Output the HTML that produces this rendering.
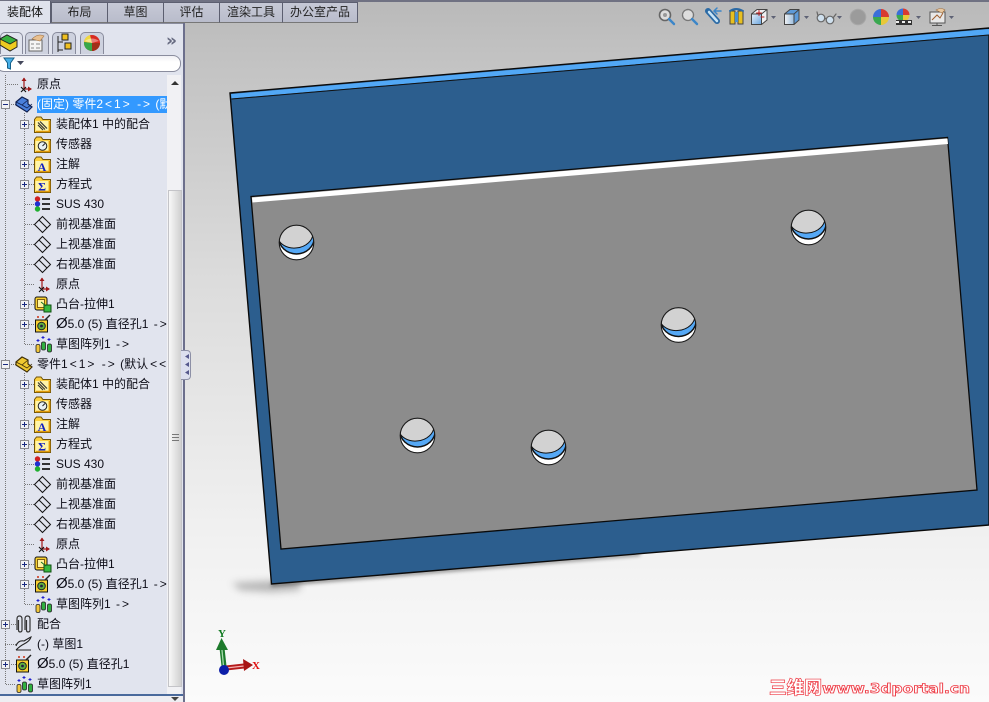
<!DOCTYPE html>
<html><head><meta charset="utf-8">
<style>
html,body{margin:0;padding:0;width:989px;height:702px;overflow:hidden;background:#fff}
body{position:relative;font:12px/16px "Liberation Sans","Noto Sans CJK SC",sans-serif;color:#111}
.abs{position:absolute}
#view{position:absolute;left:0;top:0;width:989px;height:702px}
#tabs div{position:absolute;top:2px;height:19px;background:linear-gradient(#c6c9d6,#b9bccb);border:1px solid #5c5f70;border-bottom-color:#777;box-sizing:content-box;text-align:center;line-height:19px;color:#222;font-size:12px}
#side{position:absolute;left:0;top:23px;width:183px;height:679px;background:#e1e4ee;border-top:1px solid #8a8d9e;box-sizing:border-box}
#tree{position:absolute;left:0;top:75px;width:167px;height:620px;overflow:hidden;background:#e1e4ee}
.r{position:absolute;white-space:nowrap;height:18px;line-height:18px;font-size:12px;color:#0c0c16}
.hl{background:#3399ff;color:#fff;width:130px;overflow:hidden;height:17px;line-height:17px}
.a{letter-spacing:2px;margin-left:2px}
.o{font-size:15px;line-height:0}
.ftab{position:absolute;top:32px;height:21px;width:22px;background:#ced2df;border:1px solid #888b9c;border-bottom:none;border-radius:5px 5px 0 0}
</style></head><body>
<svg id="view" viewBox="0 0 989 702" xmlns="http://www.w3.org/2000/svg">
<defs>
<linearGradient id="bg" x1="0" y1="0" x2="0" y2="1"><stop offset="0" stop-color="#b9b9b9"/><stop offset=".08" stop-color="#c2c2c2"/><stop offset=".4" stop-color="#dcdcdc"/><stop offset=".75" stop-color="#f0f0f0"/><stop offset="1" stop-color="#fbfbfb"/></linearGradient>
<linearGradient id="fb" x1="0" y1="0" x2="1" y2="1"><stop offset="0" stop-color="#e4eef8"/><stop offset="1" stop-color="#6ea8e0"/></linearGradient>
<linearGradient id="fg" x1="0" y1="0" x2="1" y2="0"><stop offset="0" stop-color="#eef0f2"/><stop offset="1" stop-color="#9fc0e0"/></linearGradient>
<filter id="bl" x="-10%" y="-200%" width="120%" height="500%"><feGaussianBlur stdDeviation="4"/></filter>
<filter id="bl2" x="-10%" y="-200%" width="120%" height="500%"><feGaussianBlur stdDeviation="1.800"/></filter>
<clipPath id="hc"><circle cx="0" cy="0" r="17.2"/></clipPath>
<g id="hole">
<circle r="17.3" fill="#fff"/>
<g clip-path="url(#hc)">
<ellipse cx="0" cy="-5" rx="18.5" ry="17.2" fill="#111"/>
<ellipse cx="0" cy="-5.5" rx="17.2" ry="16.2" fill="#55a8f5"/>
<ellipse cx="-0.5" cy="-8" rx="17.6" ry="13.4" transform="rotate(-6)" fill="#d2d2d2" stroke="#111" stroke-width="1"/>
</g>
<circle r="17.3" fill="none" stroke="#1a1a1a" stroke-width="1.1"/>
</g>
</defs>
<rect width="989" height="702" fill="url(#bg)"/>
<path d="M232 583 L271 581 L300 580 L300 590 L271 592 L240 590 Z" fill="#555" opacity=".4" filter="url(#bl)"/>
<path d="M271 583 L640 553 L640 556 L271 587 Z" fill="#333" opacity=".5" filter="url(#bl2)"/>
<polygon points="230,93 989,28 989,525 271.500,584" fill="#2c5e8e" stroke="#0a0a0a" stroke-width="1.400"/>
<polygon points="231,94 989,29 989,34.500 231.500,98.500" fill="#52a8f6"/>
<path d="M231.500 99 L989 35" stroke="#111" stroke-width="1"/>
<polygon points="251,196.500 947.500,137.500 977,490 281,549" fill="#8c8c8c" stroke="#0a0a0a" stroke-width="1.300"/>
<polygon points="252,197.500 947.500,138.500 948,144 252.500,202.500" fill="#fff"/>
<use href="#hole" x="296.500" y="242.500"/>
<use href="#hole" x="808.500" y="227.500"/>
<use href="#hole" x="678.500" y="325"/>
<use href="#hole" x="417.500" y="435.500"/>
<use href="#hole" x="548.500" y="447.500"/>
<!-- triad -->
<path d="M224 666 L222 648" stroke="#1d7a2c" stroke-width="5"/>
<path d="M223.500 666 L221.800 648" stroke="#a8dcae" stroke-width="1.300"/>
<polygon points="221.500,638 228,650 216,650" fill="#1d7a2c"/>
<path d="M226 668 L244 666" stroke="#b51a1a" stroke-width="5"/>
<path d="M226 668 L244 666" stroke="#f4b0b0" stroke-width="1.300"/>
<polygon points="253,665 243,659 244,671" fill="#a81414"/>
<circle cx="224" cy="670" r="5" fill="#0c1ea8"/>
<text x="218" y="637" font-family="Liberation Serif,serif" font-size="11" font-weight="bold" fill="#117a22">Y</text>
<text x="252" y="669" font-family="Liberation Serif,serif" font-size="11" font-weight="bold" fill="#e01010">X</text>
<!-- watermark -->
<text x="769" y="694" font-family="Noto Sans CJK SC,sans-serif" font-size="18" font-weight="900" fill="#fff" stroke="#ee3a44" stroke-width=".7" textLength="53" lengthAdjust="spacingAndGlyphs">三维网</text>
<text x="822" y="693" font-family="DejaVu Sans,sans-serif" font-size="13" font-weight="700" fill="#fff" stroke="#ee3a44" stroke-width=".8" textLength="148" lengthAdjust="spacingAndGlyphs">www.3dportal.cn</text>
<!-- top toolbar -->
<rect x="0" y="0" width="989" height="2" fill="#6f7182"/>
<g fill="none" stroke-linecap="round">
<g><circle cx="665" cy="15" r="5.500" stroke="#666" stroke-width="1.600" fill="#ddd"/><circle cx="665" cy="15" r="2" fill="#999"/><path d="M669 19 L674 24" stroke="#3c86c8" stroke-width="2.400"/></g>
<g><circle cx="688" cy="15" r="5.500" stroke="#777" stroke-width="1.400" stroke-dasharray="2 1" fill="#ddd"/><path d="M692 19 L697 24" stroke="#3c86c8" stroke-width="2.400"/></g>
<g><path d="M708 11 L717 21" stroke="#2b6aa5" stroke-width="6"/><path d="M709 12 L717 21" stroke="#c8e4f6" stroke-width="2.500"/><path d="M721 11 H714 M717 8 L714 11 L717 14" stroke="#3c86c8" stroke-width="1.500"/></g>
<g><rect x="730" y="11" width="5" height="13" fill="#e8c020" stroke="#444"/><rect x="738" y="11" width="5" height="13" fill="#e8c020" stroke="#444"/><path d="M730 11 Q736 7 743 11" stroke="#2b6aa5" stroke-width="2"/><rect x="735" y="12" width="3" height="10" fill="#4a90d0"/></g>
<g><path d="M751.500 14 L757 9.500 H767 V20 L761.500 24.500 H751.500 Z" fill="#eef0f2" stroke="#444"/><rect x="752" y="14.500" width="9" height="9.500" fill="url(#fb)"/><path d="M751.500 14 H761.500 V24.500 M761.500 14 L767 9.500" stroke="#444"/><path d="M759 10.500 v5 M756.500 13 h5 M764 17 h-3" stroke="#c02020"/></g>
<g><path d="M784.500 14 L790 9.500 H799 V20 L794 24.500 H784.500 Z" fill="#5d9ad8" stroke="#444"/><rect x="785" y="14.500" width="8.500" height="9.500" fill="url(#fg)"/><path d="M784.500 14 H794 V24.500 M794 14 L799 9.500" stroke="#444"/></g>
<g stroke="#666" stroke-width="1.200"><circle cx="821" cy="18" r="3.800" fill="#cfe0ee"/><circle cx="830" cy="20" r="3.800" fill="#cfe0ee"/><path d="M824.500 18 L826.500 19 M818 16 L817 12 M833 18 L836 14"/></g>
</g>
<g fill="#5e6275"><polygon points="771,16 776,16 773.500,19"/><polygon points="804,16 809,16 806.500,19"/><polygon points="837,16 842,16 839.500,19"/><polygon points="916,16 921,16 918.500,19"/><polygon points="949,16 954,16 951.500,19"/></g>
<circle cx="858" cy="17" r="7.800" fill="#9b9b9b" stroke="#a8a8a8"/>
<g>
<path d="M881 17 L873 17 A8 8 0 0 1 881 9 Z" fill="#3a6fd8"/>
<path d="M881 17 L881 9 A8 8 0 0 1 889 17 Z" fill="#d83a30"/>
<path d="M881 17 L889 17 A8 8 0 0 1 881 25 Z" fill="#e8c838"/>
<path d="M881 17 L881 25 A8 8 0 0 1 873 17 Z" fill="#3aa850"/>
</g>
<g>
<path d="M903 15 L896.500 15 A6.500 6.500 0 0 1 903 8.500 Z" fill="#3a6fd8"/>
<path d="M903 15 L903 8.500 A6.500 6.500 0 0 1 909.500 15 Z" fill="#d83a30"/>
<path d="M903 15 L909.500 15 A6.500 6.500 0 0 1 903 21.500 Z" fill="#e8c838"/>
<path d="M903 15 L903 21.500 A6.500 6.500 0 0 1 896.500 15 Z" fill="#3aa850"/>
<rect x="896" y="20" width="16" height="5" fill="#333"/><path d="M896 21 h3 v2 h-3z M902 21 h3 v2 h-3z M908 21 h3 v2 h-3z" fill="#eee"/>
</g>
<g><rect x="930" y="12" width="15" height="11" fill="#e8e8e8" stroke="#555"/><path d="M937 23 V25 M932 25.500 H942" stroke="#555"/><path d="M932 20 L937 15 L940 18 L943 13" stroke="#a06030" fill="none"/><path d="M936 10 Q941 7 945 10 L942 13 Z" fill="#e8c8a0" stroke="#a07040" stroke-width=".6"/></g>
</svg>

<svg width="0" height="0" style="position:absolute"><defs>
<g id="folder"><path d="M.5 3.500 L.5 16.500 L16.500 16.500 L16.500 3.500 L9 3.500 L7 1 L2.500 1 Z" fill="#fdd040" stroke="#6e5208"/><rect x="1.500" y="5" width="13" height="10" fill="#fff4a8"/><path d="M2 15.500 H15.500 V5" stroke="#e09a08" fill="none" stroke-width="1.600"/></g>
<g id="mates"><use href="#folder"/><path d="M4 6.500 L11 13.500 M6 5.500 L13 12.500 M4 9 L9 14" stroke="#333" stroke-width="1.200"/></g>
<g id="sensor"><use href="#folder"/><circle cx="8.500" cy="10" r="4.300" fill="#e8f0f4" stroke="#222"/><path d="M8.500 10 L11 7.500" stroke="#222"/></g>
<g id="note"><use href="#folder"/><text x="8" y="15" text-anchor="middle" font-family="Liberation Serif,serif" font-weight="bold" font-size="12" fill="#1420c0">A</text></g>
<g id="eq"><use href="#folder"/><text x="8" y="14.500" text-anchor="middle" font-family="Liberation Serif,serif" font-weight="bold" font-size="12" fill="#1420c0">Σ</text></g>
<g id="mat"><circle cx="3.500" cy="3" r="2.700" fill="#d02020"/><circle cx="3.500" cy="8" r="2.700" fill="#2030d0"/><circle cx="3.500" cy="13" r="2.700" fill="#20b030"/><path d="M8 3 H16 M8 8 H16 M8 13 H16" stroke="#333" stroke-width="2"/></g>
<g id="plane"><path d="M8.500 0.500 L16.500 8.500 L8.500 16.500 L.5 8.500 Z" fill="none" stroke="#111"/><path d="M5 4 L13 12" fill="none" stroke="#111"/></g>
<g id="origin"><path d="M8 2 V13 M8 13 H15" stroke="#a01818" fill="none" stroke-width="1.200"/><path d="M5.500 5 L8 1.500 L10.500 5 Z M12 10.500 L16 13 L12 15.500 Z" fill="#a01818"/><path d="M5 11 L10 16 M10 11 L5 16" stroke="#111" stroke-width="1.100"/></g>
<g id="boss"><rect x="1" y="1" width="12" height="13" rx="2" fill="#f8d030" stroke="#111"/><rect x="3.500" y="3.500" width="7" height="8" fill="#fff4a0" stroke="#806010"/><rect x="10" y="9" width="7" height="7" fill="#38b840" stroke="#105010"/><path d="M7 6 L12 10" stroke="#107020"/></g>
<g id="holei"><rect x="1.500" y="5" width="12" height="12" fill="#f8d030" stroke="#111"/><circle cx="7.500" cy="11" r="3.800" fill="#60b040" stroke="#222"/><circle cx="7.500" cy="11" r="1.400" fill="#224"/><path d="M11 5 L16 0" stroke="#222" stroke-width="1.400"/><path d="M3 2 h2 M8 2 h2" stroke="#d03010" stroke-width="1.500"/></g>
<g id="pat"><path d="M8 1 v3 M6.500 2.500 h3 M3 4 v3 M1.500 5.500 h3 M14 3 v3 M12.500 4.500 h3" stroke="#2020d0"/><rect x="1" y="9.500" width="4" height="8" rx="1.500" fill="#f2c83c" stroke="#222" stroke-width=".8"/><rect x="6.500" y="7" width="4" height="8" rx="1.500" fill="#30b040" stroke="#222" stroke-width=".8"/><rect x="12.500" y="9" width="4" height="8" rx="1.500" fill="#30b040" stroke="#222" stroke-width=".8"/></g>
<g id="partb"><path d="M1 6 L7 1 L13 4 L13 8 L17 11 L12 16 L1 9 Z" fill="#4a80dc" stroke="#102050" stroke-width="1.200"/><path d="M1 6 L7 9 L13 4 M7 9 L12 12 L17 8" stroke="#102050" fill="none" stroke-width=".8"/></g>
<g id="party"><path d="M1 6 L7 1 L13 4 L13 8 L17 11 L12 16 L1 9 Z" fill="#f0c830" stroke="#403008" stroke-width="1.200"/><path d="M1 6 L7 9 L13 4 M7 9 L12 12 L17 8" stroke="#403008" fill="none" stroke-width=".8"/></g>
<g id="clips"><path d="M2 15 V4 Q2 1 4.500 1 Q7 1 7 4 V15 Q7 17 5 17 Q3.500 17 3.500 15 V5" fill="none" stroke="#333" stroke-width="1.200"/><path d="M10 15 V4 Q10 1 12.500 1 Q15 1 15 4 V15 Q15 17 13 17 Q11.500 17 11.500 15 V5" fill="none" stroke="#333" stroke-width="1.200"/></g>
<g id="sketch"><path d="M1 15 H16 M1 11 Q3 5 9 6 Q14 3 16 2 Q15 6 9 9 Q5 11 1 15" fill="none" stroke="#222" stroke-width="1.100"/></g>
<g id="plus"><rect x=".5" y=".5" width="8" height="8" fill="#f2f2f4" stroke="#8a8a90"/><path d="M2 4.500 H7 M4.500 2 V7" stroke="#1a2a80"/></g>
<g id="minus"><rect x=".5" y=".5" width="8" height="8" fill="#f2f2f4" stroke="#8a8a90"/><path d="M2 4.500 H7" stroke="#1a2a80"/></g>
</defs></svg>

<div id="tabs">
<div style="left:51px;width:55px">布局</div>
<div style="left:107px;width:55px">草图</div>
<div style="left:163px;width:55px">评估</div>
<div style="left:219px;width:62px">渲染工具</div>
<div style="left:282px;width:74px">办公室产品</div>
</div>

<div id="side"></div>
<div class="abs" style="left:0;top:1px;width:50px;height:22px;background:#dfe2ec;border-right:1px solid #5c5f70;text-align:center;line-height:22px;font-size:12px;color:#111;z-index:2">装配体</div>
<div class="abs" style="left:183px;top:23px;width:2px;height:679px;background:#6c6f8c"></div>

<!-- feature manager tabs -->
<div class="ftab" style="left:0;width:21px;background:#e1e4ee"></div>
<div class="ftab" style="left:25px"></div>
<div class="ftab" style="left:52px"></div>
<div class="ftab" style="left:80px"></div>
<svg class="abs" style="left:0;top:30px" width="110" height="24">
<path d="M0 9 L7 5 L17 10 L17 17 L10 21 L0 15 Z" fill="#eecb20" stroke="#222"/><path d="M7 5 L17 10 L10 14 L0 9 Z" fill="#38b040" stroke="#222" stroke-width=".8"/>
<rect x="29" y="10" width="13" height="11" fill="#f4f4f4" stroke="#666"/><path d="M31 14 h3 M31 18 h3 M36 14 h4 M36 18 h4" stroke="#888"/><path d="M32 9 Q38 3 44 6 L40 11 Z" fill="#e8c090" stroke="#a07040" stroke-width=".6"/>
<path d="M58 6 V22 M58 12 H63 M58 20 H63" stroke="#222" fill="none"/><rect x="62" y="4" width="6" height="6" fill="#f0c020" stroke="#222"/><rect x="65" y="13" width="6" height="6" fill="#f0c020" stroke="#222"/>
<circle cx="92" cy="13" r="8" fill="#d82a20"/><path d="M92 13 L84 12 A8 8 0 0 1 90 5 Z" fill="#f0d840"/><path d="M92 13 L100 13 A8 8 0 0 1 92 21 Z" fill="#a03018"/><path d="M92 13 L92 21 A8 8 0 0 1 84 12 Z" fill="#38a848"/><path d="M85 11 Q92 6 99 11 L92 13 Z" fill="#fff" opacity=".4"/>
</svg>
<div class="abs" style="left:166px;top:31px;font:bold 17px 'DejaVu Sans',sans-serif;color:#666a80">»</div>
<div class="abs" style="left:-4px;top:55px;width:183px;height:15px;background:linear-gradient(#f0f0f4,#fff 40%);border:1px solid #8a8d9e;border-radius:8px"></div>
<svg class="abs" style="left:3px;top:57px" width="26" height="13"><path d="M1 1 H11 L7.500 6 V12 L4.500 11 V6 Z" fill="#48b0e8" stroke="#15608a"/><path d="M14 4 H21 L17.500 8 Z" fill="#44485c"/></svg>

<div id="tree">
<svg class="abs" style="left:0;top:0" width="167" height="620">
<g stroke="#777" stroke-dasharray="1 1" fill="none">
<path d="M5.500 0 V609.500 H16"/>
<path d="M24.500 38 V269.500 H34 M24.500 298 V529.500 H34"/>
<path d="M18 9.500 H6 M5 29.500 H16 M5 289.500 H16 M5 549.500 H16 M5 569.500 H16 M5 589.500 H16"/>
<path d="M25 49.500 H34 M25 69.500 H34 M25 89.500 H34 M25 109.500 H34 M25 129.500 H34 M25 149.500 H34 M25 169.500 H34 M25 189.500 H34 M25 209.500 H34 M25 229.500 H34 M25 249.500 H34"/>
<path d="M25 309.500 H34 M25 329.500 H34 M25 349.500 H34 M25 369.500 H34 M25 389.500 H34 M25 409.500 H34 M25 429.500 H34 M25 449.500 H34 M25 469.500 H34 M25 489.500 H34 M25 509.500 H34"/>
</g>
<use href="#origin" x="16" y="1"/>
<use href="#minus" x="1" y="25"/><use href="#partb" x="15" y="21"/>
<use href="#plus" x="20" y="45"/><use href="#mates" x="34" y="41"/>
<use href="#sensor" x="34" y="61"/>
<use href="#plus" x="20" y="85"/><use href="#note" x="34" y="81"/>
<use href="#plus" x="20" y="105"/><use href="#eq" x="34" y="101"/>
<use href="#mat" x="34" y="121"/>
<use href="#plane" x="34" y="141"/><use href="#plane" x="34" y="161"/><use href="#plane" x="34" y="181"/>
<use href="#origin" x="34" y="201"/>
<use href="#plus" x="20" y="225"/><use href="#boss" x="34" y="221"/>
<use href="#plus" x="20" y="245"/><use href="#holei" x="34" y="240"/>
<use href="#pat" x="35" y="260"/>
<use href="#minus" x="1" y="285"/><use href="#party" x="15" y="281"/>
<use href="#plus" x="20" y="305"/><use href="#mates" x="34" y="301"/>
<use href="#sensor" x="34" y="321"/>
<use href="#plus" x="20" y="345"/><use href="#note" x="34" y="341"/>
<use href="#plus" x="20" y="365"/><use href="#eq" x="34" y="361"/>
<use href="#mat" x="34" y="381"/>
<use href="#plane" x="34" y="401"/><use href="#plane" x="34" y="421"/><use href="#plane" x="34" y="441"/>
<use href="#origin" x="34" y="461"/>
<use href="#plus" x="20" y="485"/><use href="#boss" x="34" y="481"/>
<use href="#plus" x="20" y="505"/><use href="#holei" x="34" y="500"/>
<use href="#pat" x="35" y="520"/>
<use href="#plus" x="1" y="545"/><use href="#clips" x="15" y="540"/>
<use href="#sketch" x="15" y="560"/>
<use href="#plus" x="1" y="585"/><use href="#holei" x="15" y="580"/>
<use href="#pat" x="16" y="600"/>
</svg>
<div class="r" style="left:37px;top:0">原点</div>
<div class="r hl" style="left:37px;top:21px">(固定) 零件2<span class="a">&lt;1&gt;</span> <span class="a">-&gt;</span> (默认&lt;&lt;默</div>
<div class="r" style="left:56px;top:40px">装配体1 中的配合</div>
<div class="r" style="left:56px;top:60px">传感器</div>
<div class="r" style="left:56px;top:80px">注解</div>
<div class="r" style="left:56px;top:100px">方程式</div>
<div class="r" style="left:56px;top:120px">SUS 430</div>
<div class="r" style="left:56px;top:140px">前视基准面</div>
<div class="r" style="left:56px;top:160px">上视基准面</div>
<div class="r" style="left:56px;top:180px">右视基准面</div>
<div class="r" style="left:56px;top:200px">原点</div>
<div class="r" style="left:56px;top:220px">凸台-拉伸1</div>
<div class="r" style="left:56px;top:240px"><span class="o">Ø</span>5.0 (5) 直径孔1 <span class="a">-&gt;</span></div>
<div class="r" style="left:56px;top:260px">草图阵列1 <span class="a">-&gt;</span></div>
<div class="r" style="left:37px;top:280px;width:130px;overflow:hidden">零件1<span class="a">&lt;1&gt;</span> <span class="a">-&gt;</span> (默认<span class="a">&lt;&lt;</span>默</div>
<div class="r" style="left:56px;top:300px">装配体1 中的配合</div>
<div class="r" style="left:56px;top:320px">传感器</div>
<div class="r" style="left:56px;top:340px">注解</div>
<div class="r" style="left:56px;top:360px">方程式</div>
<div class="r" style="left:56px;top:380px">SUS 430</div>
<div class="r" style="left:56px;top:400px">前视基准面</div>
<div class="r" style="left:56px;top:420px">上视基准面</div>
<div class="r" style="left:56px;top:440px">右视基准面</div>
<div class="r" style="left:56px;top:460px">原点</div>
<div class="r" style="left:56px;top:480px">凸台-拉伸1</div>
<div class="r" style="left:56px;top:500px"><span class="o">Ø</span>5.0 (5) 直径孔1 <span class="a">-&gt;</span></div>
<div class="r" style="left:56px;top:520px">草图阵列1 <span class="a">-&gt;</span></div>
<div class="r" style="left:37px;top:540px">配合</div>
<div class="r" style="left:37px;top:560px">(-) 草图1</div>
<div class="r" style="left:37px;top:580px"><span class="o">Ø</span>5.0 (5) 直径孔1</div>
<div class="r" style="left:37px;top:600px">草图阵列1</div>
</div>

<!-- scrollbar -->
<div class="abs" style="left:167px;top:75px;width:14px;height:620px;background:#f1f1f4"></div>
<div class="abs" style="left:168px;top:190px;width:14px;height:497px;background:linear-gradient(90deg,#f8f8f8,#d0d0d0);border:1px solid #c4c4c8;box-sizing:border-box"></div>
<svg class="abs" style="left:170px;top:80px" width="10" height="6"><path d="M1 5 H9 L5 1 Z" fill="#333"/></svg>
<svg class="abs" style="left:172px;top:434px" width="8" height="9"><path d="M0 .5 H7 M0 3.500 H7 M0 6.500 H7" stroke="#777"/></svg>
<div class="abs" style="left:0;top:694px;width:183px;height:2px;background:#4a6a9c"></div>
<div class="abs" style="left:0;top:696px;width:183px;height:6px;background:#eeeef2"></div>
<svg class="abs" style="left:170px;top:696px" width="10" height="6"><path d="M1 1 H9 L5 5 Z" fill="#444"/></svg>
<!-- flyout handle -->
<div class="abs" style="left:181px;top:350px;width:9px;height:28px;background:#dcdfee;border:1px solid #8d90a6;border-left:none;border-radius:0 4px 4px 0"></div>
<svg class="abs" style="left:184px;top:353px" width="6" height="24"><path d="M5 1 L1 3.500 L5 6 Z M5 9 L1 11.500 L5 14 Z M5 17 L1 19.500 L5 22 Z" fill="#55588c"/></svg>
</body></html>
